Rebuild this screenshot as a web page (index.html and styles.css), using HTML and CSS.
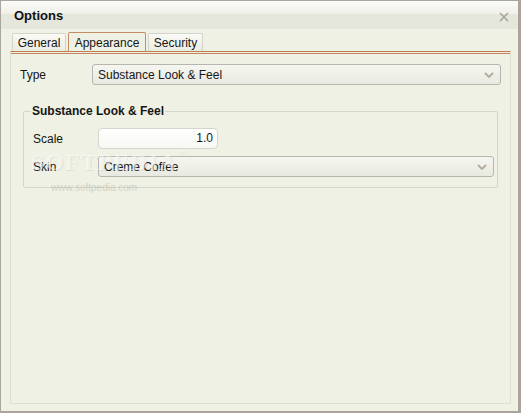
FILE: index.html
```html
<!DOCTYPE html>
<html lang="en">
<head>
    <meta charset="UTF-8">
    <link rel="stylesheet" href="styles.css">
    <title>Options</title>
</head>
<body>
    <div class="window">
        <div class="titlebar">
            <span class="title">Options</span>
            <svg class="close" width="10" height="10" viewBox="0 0 10 10">
                <path d="M1 1 L9 9 M9 1 L1 9" stroke="#aaa399" stroke-width="1.6" fill="none"/>
            </svg>
        </div>

        <div class="content">
            <div class="tabs">
                <div class="tab tab-general">General</div>
                <div class="tab tab-appearance active">Appearance</div>
                <div class="tab tab-security">Security</div>
            </div>

            <div class="panel">
                <div class="row type-row">
                    <label class="label type-label">Type</label>
                    <div class="combo type-combo">
                        <span>Substance Look &amp; Feel</span>
                        <svg class="chevron" width="10" height="6" viewBox="0 0 10 6"><path d="M1 1 L5 5 L9 1" stroke="#b3aa9c" stroke-width="1.8" fill="none"/></svg>
                    </div>
                </div>

                <fieldset class="group">
                    <legend>Substance Look &amp; Feel</legend>
                    <div class="row">
                        <label class="label group-label">Scale</label>
                        <div class="textfield">1.0</div>
                    </div>
                    <div class="row">
                        <label class="label group-label">Skin</label>
                        <div class="combo skin-combo">
                            <span>Creme Coffee</span>
                            <svg class="chevron" width="10" height="6" viewBox="0 0 10 6"><path d="M1 1 L5 5 L9 1" stroke="#b3aa9c" stroke-width="1.8" fill="none"/></svg>
                        </div>
                    </div>
                </fieldset>
            </div>
        </div>

        <!-- watermark sits over the form -->
        <div class="watermark">SOFTPEDIA<sup>™</sup></div>
        <div class="watermark-url">www.softpedia.com</div>
    </div>
</body>
</html>
```

FILE: styles.css
```css
html, body {
    margin: 0;
    padding: 0;
}

body {
    font-family: "Liberation Sans", Arial, sans-serif;
    font-size: 12px;
    color: #161616;
    background-color: #eef1e3;
}

.window {
    position: relative;
    width: 521px;
    height: 413px;
    box-sizing: border-box;
    border: 1px solid #aba69d;
    border-right: 3px solid #aaa59c;
    border-bottom: 2px solid #aaa59c;
    background-color: #eef1e3;
    display: flex;
    flex-direction: column;
    overflow: hidden;
}

/* title bar */
.titlebar {
    height: 28px;
    flex: none;
    display: flex;
    align-items: center;
    justify-content: space-between;
    padding: 0 9px 0 13px;
    background: linear-gradient(to bottom, #fbfbf8 0, #f0f0e9 13px, #e5e6dc 13px, #e5e6dc 100%);
}

.title {
    font-weight: bold;
    font-size: 13px;
    color: #111;
    padding-top: 1px;
}

.close {
    margin-top: 4px;
}

/* tabs + panel */
.content {
    flex: 1;
    display: flex;
    flex-direction: column;
    padding: 3px 7px 7px 9px;
}

.tabs {
    display: flex;
    gap: 2px;
    padding-left: 2px;
    height: 19px;
}

.tab {
    box-sizing: border-box;
    height: 19px;
    padding: 3px 0 0 0;
    text-align: center;
    border: 1px solid #d2d4ca;
    border-bottom: none;
    border-radius: 2px 2px 0 0;
    background: linear-gradient(to bottom, #fafaf6, #eaebe1);
    color: #161616;
}

.tab-general { width: 54px; margin-top: 1px; height: 18px; padding-top: 2px; }
.tab-appearance { width: 78px; }
.tab-security { width: 55px; margin-top: 1px; height: 18px; padding-top: 2px; }

.tab.active {
    border-color: #c58d62;
    background: #eef1e3;
}

.panel {
    flex: 1;
    border: 1px solid #dcdfd2;
    border-top: 1px solid #c07c4c;
    box-shadow: inset 0 1px 0 #eef1e3, inset 0 2px 0 #c4855a;
    padding: 12px 9px 0 9px;
}

.row {
    display: flex;
    align-items: center;
}

.label {
    flex: none;
}

.type-label {
    width: 72px;
}

.combo {
    position: relative;
    box-sizing: border-box;
    height: 21px;
    display: flex;
    align-items: center;
    padding-left: 5px;
    border: 1px solid #b6b6ae;
    border-radius: 3px;
    background: linear-gradient(to bottom, #f6f6f1, #e8e9e0);
}

.type-combo {
    flex: 1;
}

.chevron {
    position: absolute;
    right: 6px;
    top: 7px;
}

/* group box */
.group {
    margin: 19px 3px 0 3px;
    padding: 10px 3px 10px 9px;
    border: 1px solid #d3d6ca;
    border-radius: 2px;
}

.group legend {
    font-weight: bold;
    padding: 0 1px;
    margin-left: -2px;
    line-height: 14px;
}

.group .row + .row {
    margin-top: 7px;
}

.group-label {
    width: 65px;
}

.textfield {
    box-sizing: border-box;
    width: 120px;
    height: 21px;
    line-height: 19px;
    padding-right: 4px;
    text-align: right;
    border: 1px solid #d5d6cd;
    border-radius: 4px;
    background: linear-gradient(to bottom, #ffffff, #f7f8f2);
}

.skin-combo {
    flex: 1;
}

/* softpedia watermark */
.watermark {
    position: absolute;
    left: 30px;
    top: 148px;
    font-family: "Liberation Serif", serif;
    font-size: 24px;
    font-weight: bold;
    letter-spacing: 1px;
    color: rgba(255, 255, 255, 0.5);
    text-shadow: 1px 1px 0 rgba(120, 120, 100, 0.12);
    pointer-events: none;
}

.watermark sup {
    font-size: 8px;
    font-family: "Liberation Sans", sans-serif;
    vertical-align: top;
}

.watermark-url {
    position: absolute;
    left: 50px;
    top: 181px;
    font-size: 10px;
    color: rgba(150, 150, 140, 0.35);
    pointer-events: none;
}
```
